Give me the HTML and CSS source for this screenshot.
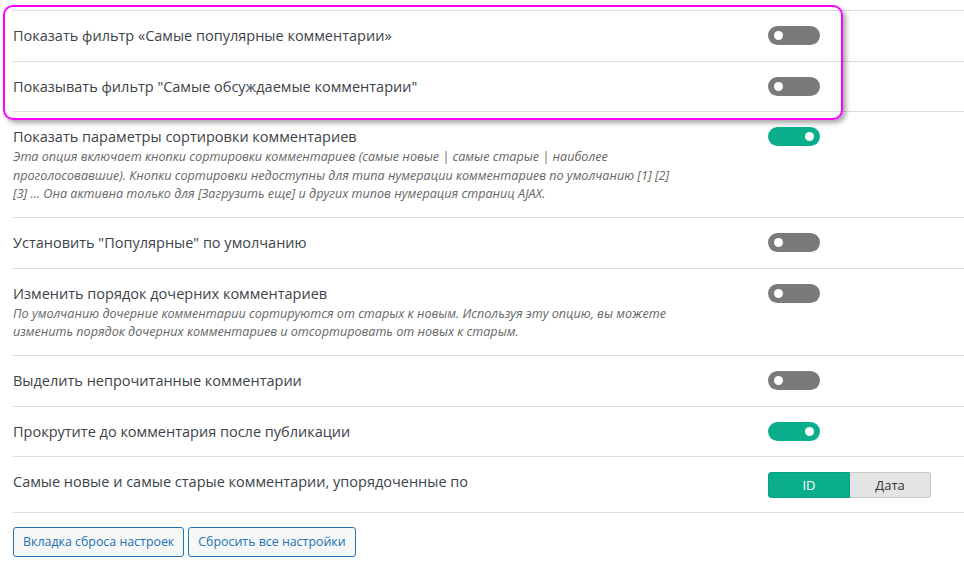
FILE: index.html
```html
<!DOCTYPE html>
<html lang="ru">
<head>
  <meta charset="UTF-8" />
  <title>Настройки комментариев</title>
  <link rel="stylesheet" href="styles.css">
</head>
<body>

  <div class="settings">
    <div class="highlight"></div>

    <div class="row">
      <div class="label">
        <div class="title">Показать фильтр «Самые популярные комментарии»</div>
      </div>
      <div class="control"><span class="toggle"></span></div>
    </div>

    <div class="row">
      <div class="label">
        <div class="title">Показывать фильтр "Самые обсуждаемые комментарии"</div>
      </div>
      <div class="control"><span class="toggle"></span></div>
    </div>

    <div class="row">
      <div class="label">
        <div class="title">Показать параметры сортировки комментариев</div>
        <div class="desc">Эта опция включает кнопки сортировки комментариев (самые новые | самые старые | наиболее проголосовавшие). Кнопки сортировки недоступны для типа нумерации комментариев по умолчанию [1] [2] [3] ... Она активна только для [Загрузить еще] и других типов нумерация страниц AJAX.</div>
      </div>
      <div class="control"><span class="toggle on"></span></div>
    </div>

    <div class="row">
      <div class="label">
        <div class="title">Установить "Популярные" по умолчанию</div>
      </div>
      <div class="control"><span class="toggle"></span></div>
    </div>

    <div class="row">
      <div class="label">
        <div class="title">Изменить порядок дочерних комментариев</div>
        <div class="desc">По умолчанию дочерние комментарии сортируются от старых к новым. Используя эту опцию, вы можете изменить порядок дочерних комментариев и отсортировать от новых к старым.</div>
      </div>
      <div class="control"><span class="toggle"></span></div>
    </div>

    <div class="row">
      <div class="label">
        <div class="title">Выделить непрочитанные комментарии</div>
      </div>
      <div class="control"><span class="toggle"></span></div>
    </div>

    <div class="row">
      <div class="label">
        <div class="title">Прокрутите до комментария после публикации</div>
      </div>
      <div class="control"><span class="toggle on"></span></div>
    </div>

    <div class="row">
      <div class="label">
        <div class="title">Самые новые и самые старые комментарии, упорядоченные по</div>
      </div>
      <div class="control">
        <div class="switcher">
          <span class="opt active">ID</span>
          <span class="opt">Дата</span>
        </div>
      </div>
    </div>

    <div class="actions">
      <button class="btn">Вкладка сброса настроек</button>
      <button class="btn">Сбросить все настройки</button>
    </div>
  </div>

</body>
</html>
```

FILE: styles.css
```css
body {
  margin: 0;
  background: #fff;
  color: #3c434a;
  font-family: "Open Sans", "Liberation Sans", sans-serif;
}
.settings {
  position: relative;
  padding: 10px 0 0 13px;
}
.highlight {
  position: absolute;
  left: 3px;
  top: 5px;
  width: 836px;
  height: 111px;
  border: 2px solid #f0f;
  border-radius: 10px;
  box-shadow: 3px 3px 5px rgba(0, 0, 0, 0.35);
  pointer-events: none;
}
.row {
  display: grid;
  grid-template-columns: 755px auto;
  padding: 14px 0 13.5px;
  border-top: 1px solid #dcdcde;
}
.title {
  font-size: 14.5px;
  line-height: 22px;
  color: #3c434a;
}
.desc {
  max-width: 667px;
  font-size: 12.6px;
  font-style: italic;
  line-height: 18.5px;
  color: #666;
}
.control {
  padding-top: 1px;
}
.toggle {
  display: block;
  position: relative;
  width: 52px;
  height: 19px;
  border-radius: 10px;
  background: #7a7a7a;
}
.toggle::after {
  content: "";
  position: absolute;
  left: 6px;
  top: 5px;
  width: 9px;
  height: 9px;
  border-radius: 50%;
  background: #fff;
}
.toggle.on {
  background: #0bae8c;
}
.toggle.on::after {
  left: auto;
  right: 6px;
}
.switcher {
  display: flex;
  width: 163px;
  height: 26px;
}
.opt {
  flex: 1;
  display: flex;
  align-items: center;
  justify-content: center;
  font-size: 13px;
  background: #e4e4e4;
  border: 1px solid #c8c8c8;
  border-left: none;
  border-radius: 0 3px 3px 0;
  color: #333;
}
.opt.active {
  background: #0bae8c;
  border: 1px solid #0aa283;
  border-radius: 3px 0 0 3px;
  color: #fff;
}
.actions {
  display: flex;
  gap: 4px;
  padding-top: 14px;
  border-top: 1px solid #dcdcde;
}
.btn {
  height: 30px;
  padding: 0 9px;
  font-family: "Open Sans", "Liberation Sans", sans-serif;
  font-size: 12.4px;
  color: #2271b1;
  background: #f6f7f7;
  border: 1px solid #2271b1;
  border-radius: 3px;
  cursor: pointer;
}
```
